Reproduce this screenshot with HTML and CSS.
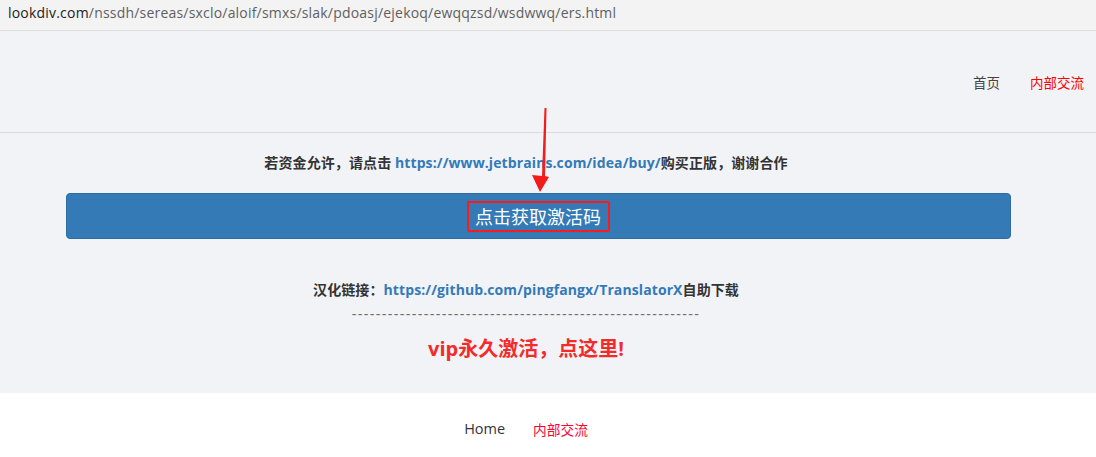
FILE: index.html
```html
<!DOCTYPE html>
<html lang="zh-CN">
<head>
<meta charset="utf-8">
<title>lookdiv</title>
<link rel="stylesheet" href="styles.css">
</head>
<body>
<div class="addr"><span class="host">lookdiv.com</span>/nssdh/sereas/sxclo/aloif/smxs/slak/pdoasj/ejekoq/ewqqzsd/wsdwwq/ers.html</div>
<header class="header">
  <nav class="nav">
    <a class="nav-home" href="#">首页</a>
    <a class="nav-red" href="#">内部交流</a>
  </nav>
</header>
<main class="main">
  <p class="line1">若资金允许，请点击 <a class="link" href="#">https://www.jetbrains.com/idea/buy/</a>购买正版，谢谢合作</p>
  <div class="btn-row"><button class="btn"><span class="btn-label">点击获取激活码</span></button></div>
  <p class="line2">汉化链接：<a class="link" href="#">https://github.com/pingfangx/TranslatorX</a>自助下载</p>
  <p class="dashes">----------------------------------------------------------</p>
  <p class="vip">vip永久激活，点这里!</p>
  <svg class="arrow" width="30" height="90" viewBox="0 0 30 90">
    <polygon points="14.5,0 16.5,0 15,68 19,69 10,84 2,67 12,68" fill="#f31b1b"/>
  </svg>
</main>
<footer class="footer">
  <a class="foot-home" href="#">Home</a>
  <a class="foot-red" href="#">内部交流</a>
</footer>
</body>
</html>
```
FILE: styles.css
```css
html, body {
  margin: 0;
  padding: 0;
  background: #ffffff;
  font-family: "Open Sans", "Noto Sans CJK SC", sans-serif;
  color: #333;
}
a { text-decoration: none; }

.addr {
  height: 30px;
  line-height: 26px;
  padding-left: 8px;
  background: #f3f3f3;
  border-bottom: 1px solid #dedede;
  font-family: "Open Sans", "Noto Sans CJK SC", sans-serif;
  font-size: 14px;
  color: #5f5f5f;
  letter-spacing: 0.2px;
}
.addr .host { color: #222; }

.header {
  height: 100px;
  background: #f2f3f7;
  border-top: 1px solid #f2f3f7;
  border-bottom: 1px solid #dcdcdf;
  display: flex;
  align-items: center;
  justify-content: flex-end;
}
.nav {
  display: flex;
  gap: 30px;
  padding-right: 12px;
  font-family: "Noto Sans CJK SC", sans-serif;
  font-size: 13.5px;
}
.nav-home { color: #444; }
.nav-red { color: #ff0000; }

.main {
  position: relative;
  background: #f2f3f7;
  height: 260px;
  padding-top: 1px;
  box-sizing: border-box;
}
.line1, .line2 {
  width: 1052px;
  margin: 0;
  text-align: center;
  font-weight: bold;
  font-size: 14px;
  letter-spacing: 0.1px;
  color: #333;
  font-family: "Open Sans", "Noto Sans CJK SC", sans-serif;
}
.line1 { margin-top: 19px; line-height: 20px; }
.link { color: #337ab7; }

.btn-row {
  margin-top: 20px;
  padding-left: 66px;
}
.btn {
  width: 945px;
  height: 46px;
  background: #337ab7;
  border: 1px solid #2e6da4;
  border-radius: 4px;
  color: #fff;
  font-family: "Noto Sans CJK SC", sans-serif;
  font-size: 18px;
  padding: 0;
  display: flex;
  align-items: center;
  justify-content: center;
}
.btn-label {
  border: 2px solid #ff1a1a;
  border-radius: 2px;
  padding: 0 7px 0 6px;
  line-height: 27px;
}

.line2 { margin-top: 41px; line-height: 20px; }
.dashes {
  width: 1052px;
  margin: 4px 0 0;
  text-align: center;
  color: #707070;
  font-size: 14px;
  line-height: 20px;
  letter-spacing: 1.35px;
  font-family: "Liberation Sans", sans-serif;
}
.vip {
  width: 1052px;
  margin: 11px 0 0;
  text-align: center;
  color: #f42b2b;
  font-weight: bold;
  font-size: 20px;
  line-height: 28px;
  font-family: "Open Sans", "Noto Sans CJK SC", sans-serif;
}
.arrow {
  position: absolute;
  left: 530px;
  top: -25px;
}

.footer {
  display: flex;
  justify-content: center;
  gap: 28px;
  width: 1052px;
  padding-top: 26px;
  font-size: 14px;
}
.foot-home { color: #333; font-family: "Open Sans", sans-serif; font-size: 14.5px; }
.foot-red { color: #ff0033; font-family: "Noto Sans CJK SC", sans-serif; font-size: 13.7px; }
```
